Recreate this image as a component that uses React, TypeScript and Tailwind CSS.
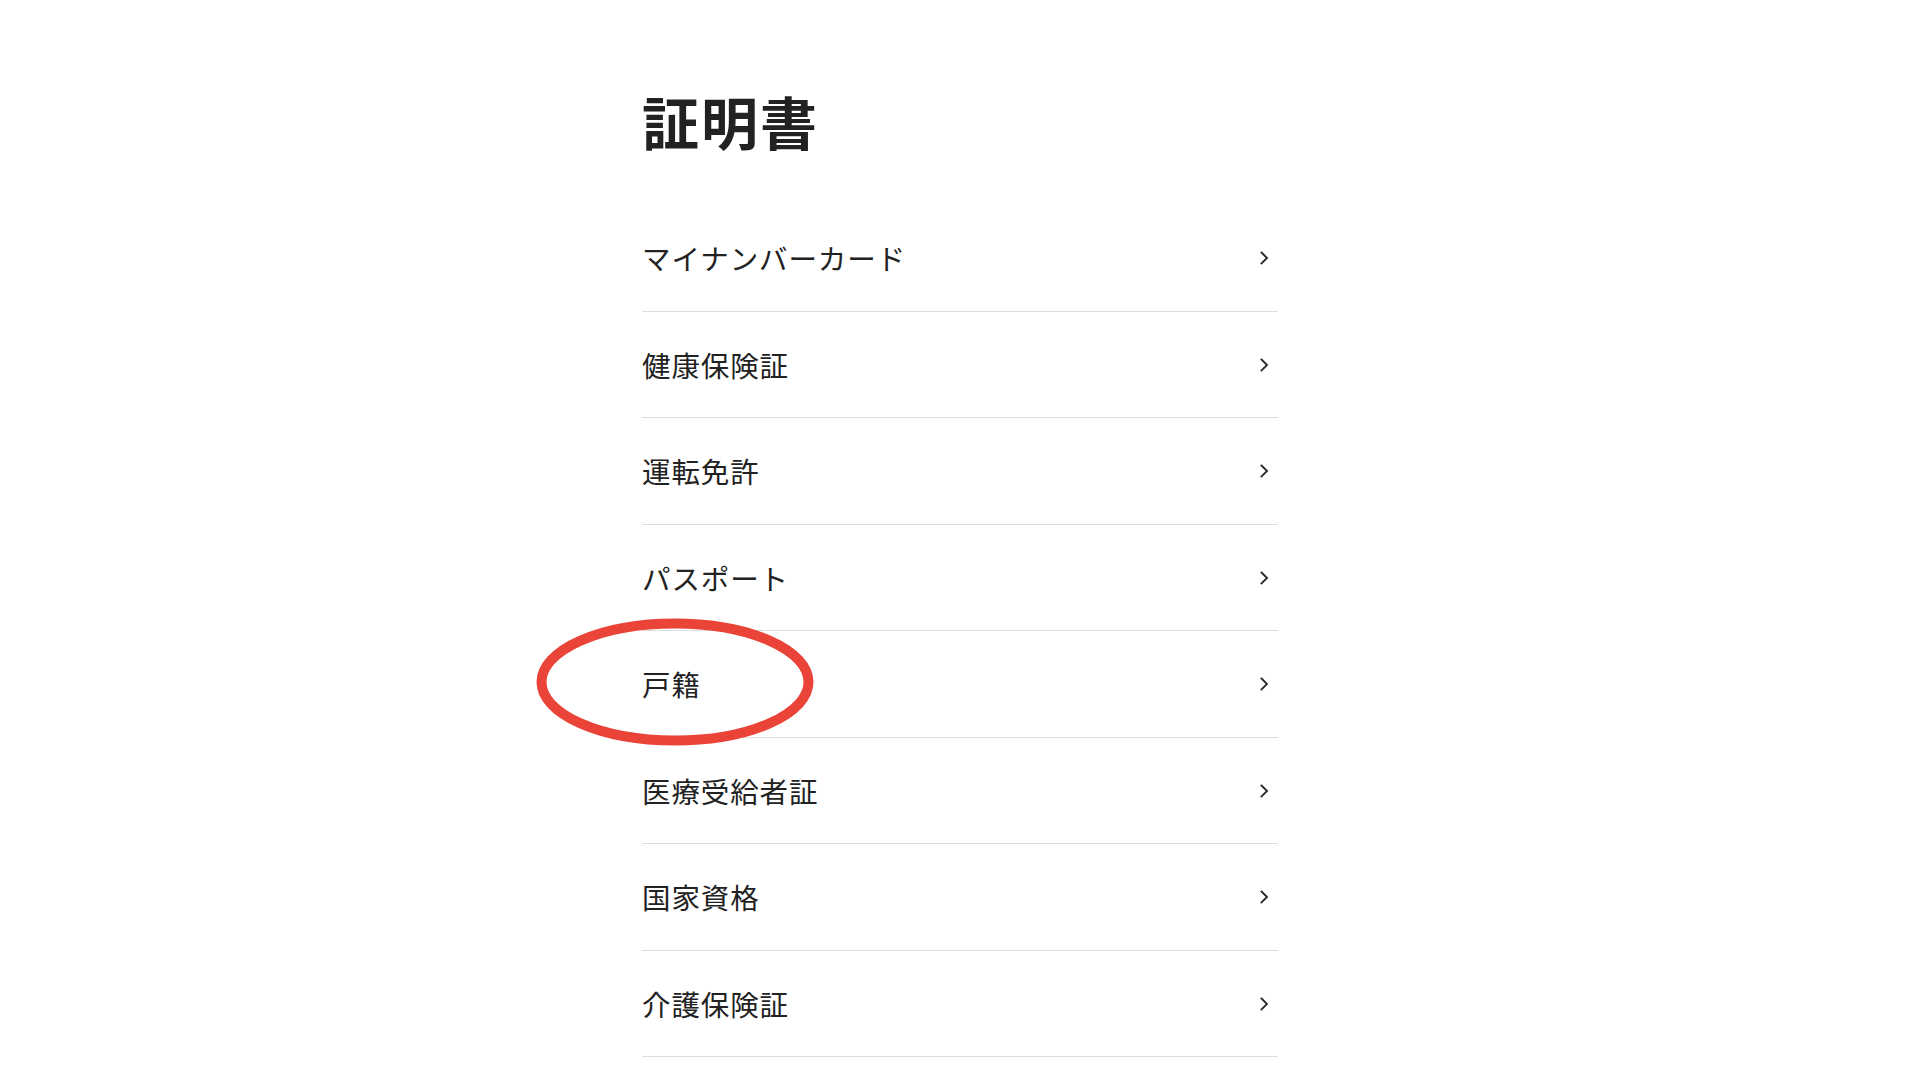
const items = [
  "マイナンバーカード",
  "健康保険証",
  "運転免許",
  "パスポート",
  "戸籍",
  "医療受給者証",
  "国家資格",
  "介護保険証",
];

const Chevron = () => (
  <svg width="9" height="14" viewBox="0 0 9 14" fill="none">
    <polyline
      points="1.5,1.5 7,7 1.5,12.5"
      stroke="#2b2b2b"
      strokeWidth="1.9"
      strokeLinecap="square"
      strokeLinejoin="miter"
    />
  </svg>
);

// red circle drawn over the 戸籍 row
const Circle = () => (
  <svg
    className="pointer-events-none absolute left-[-106px] top-[-13px]"
    width="280"
    height="130"
    viewBox="0 0 280 130"
    fill="none"
  >
    <ellipse cx="139" cy="64" rx="133.5" ry="58.5" stroke="#ea4338" strokeWidth="10" />
  </svg>
);

export default function App() {
  return (
    <div className="min-h-screen bg-white font-['Noto_Sans_CJK_JP','Noto_Sans',sans-serif] text-[#222]">
      <div className="mx-auto w-[636px]">
        <h1 className="mt-[92px] mb-[57px] h-[56px] text-[57px] font-semibold leading-none tracking-[2px]">
          証明書
        </h1>
        <ul>
          {items.map((x) => {
            return (
              <li
                key={x}
                className="relative flex h-[106.5px] items-center justify-between border-b border-[#dcdcdc] pr-[9px] pt-[1px]"
              >
                <span className="text-[28.5px] leading-none tracking-[0.9px]">{x}</span>
                <Chevron />
                {x === "戸籍" && <Circle />}
              </li>
            );
          })}
        </ul>
      </div>
    </div>
  );
}
